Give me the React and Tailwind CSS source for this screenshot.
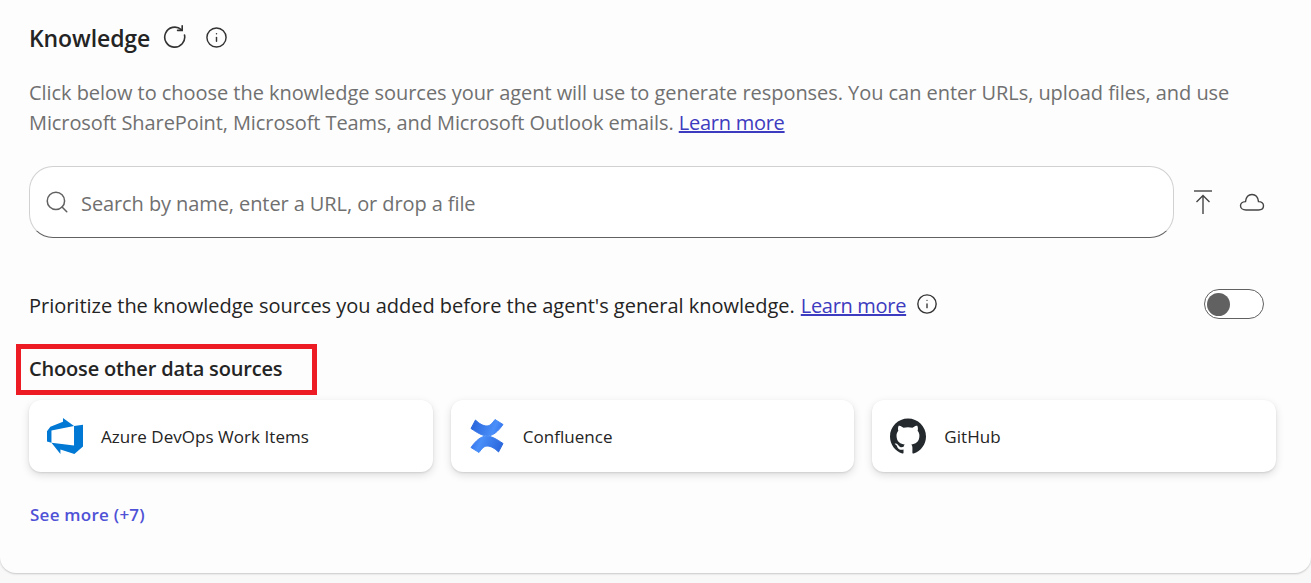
import { SiGithub } from 'react-icons/si';
import { Search, Info } from 'lucide-react';

const FONT = 'font-["Open_Sans","Noto_Sans",sans-serif]';

function AzureDevOpsIcon() {
	return (
		<svg width="36" height="36" viewBox="0 0 24 24" fill="#0078d4">
			<path d="M0 8.877L2.247 5.91l8.405-3.416V.022l7.37 5.393L2.966 8.338v8.225L0 15.707zm24-4.45v14.651l-5.753 4.9-9.303-3.057v3.056l-5.978-7.416 15.057 1.798V5.415z" />
		</svg>
	);
}

function ConfluenceIcon() {
	const band = 'M7.500 3C11 6.500 15 9 19 9C22 9 24.500 6 27 2.500L35 7.500C30.500 14 25 19 19.500 19C15 19 9.500 16 3 11.500Z';
	return (
		<svg width="38" height="38" viewBox="0 0 38 38">
			<defs>
				<linearGradient id="confBand" x1="0" y1="0" x2="1" y2="0.2">
					<stop offset="0" stopColor="#2560d8" />
					<stop offset="0.8" stopColor="#4a8ff9" />
					<stop offset="1" stopColor="#3a7bef" />
				</linearGradient>
			</defs>
			<path d={band} fill="url(#confBand)" stroke="url(#confBand)" strokeWidth="1" strokeLinejoin="round" />
			<path d={band} fill="url(#confBand)" stroke="url(#confBand)" strokeWidth="1" strokeLinejoin="round" transform="rotate(180 19 19)" />
		</svg>
	);
}

function RefreshIcon() {
	return (
		<svg width="24" height="24" viewBox="0 0 24 24" fill="none" stroke="#333333" strokeWidth="1.6" strokeLinecap="round">
			<path d="M18.300 4.600A10 10 0 1 0 21.500 10" />
			<path d="M19.200 0.800V5.400H14.600" />
		</svg>
	);
}

function UploadIcon() {
	return (
		<svg width="20" height="24" viewBox="0 0 20 24" fill="none" stroke="#444444" strokeWidth="1.4">
			<path d="M1 1H19" />
			<path d="M10 24V5.500M3.500 12L10 5.500L16.500 12" />
		</svg>
	);
}

function CloudIcon() {
	return (
		<svg width="26" height="20" viewBox="0 0 26 20" fill="none" stroke="#444444" strokeWidth="1.4">
			<path d="M7 18H19.500C22.500 18 24.500 16.200 24.500 13.800C24.500 11.300 22.500 9.500 19.500 9.600C19 5.500 16.500 2.500 13 2.500C9.500 2.500 7 5.500 6.500 9.600C3.500 9.800 1.500 11.500 1.500 13.800C1.500 16.200 3.800 18 7 18Z" />
		</svg>
	);
}

function SourceCard({ icon, label }) {
	return (
		<div className="flex h-[72px] items-center gap-[17px] rounded-[12px] bg-white pl-[17px] shadow-[0_1px_2px_rgba(0,0,0,0.1),0_3px_8px_rgba(0,0,0,0.13)]">
			<div className="flex w-[38px] justify-center">{icon}</div>
			<span className="pt-[1px] text-[17px] tracking-[0.04px] text-[#242424]">{label}</span>
		</div>
	);
}

export default function App() {
	return (
		<div className={`h-[583px] w-[1311px] overflow-hidden bg-[#f8f8f8] ${FONT}`}>
			<div className="relative h-[573px] rounded-b-[16px] bg-[#fdfdfd] pl-[29px] pr-[35px] shadow-[0_1px_2px_rgba(0,0,0,0.2)]">
				<div className="flex h-[76px] items-center pt-[1px]">
					<h2 className="text-[23px] font-semibold tracking-[-0.1px] text-[#242424]">Knowledge</h2>
					<span className="mb-[3px] ml-[13px] flex"><RefreshIcon /></span>
					<Info className="mb-[3px] ml-[18px]" size={23} strokeWidth={1.5} color="#333333" />
				</div>

				<p className="pt-[2px] text-[20px] leading-[30px] tracking-[-0.05px] text-[#707070]">
					Click below to choose the knowledge sources your agent will use to generate responses. You can enter URLs, upload files, and use
					<br />
					<span className="tracking-[-0.095px]">Microsoft SharePoint, Microsoft Teams, and Microsoft Outlook emails.</span>{' '}
					<a className="tracking-[-0.25px] text-[#3d3bbf] underline">Learn more</a>
				</p>

				<div className="mt-[28px] flex items-center">
					<div className="flex h-[72px] flex-1 items-center rounded-[24px] border border-[#d1d1d1] border-b-[#616161] bg-white pl-[14px]">
						<Search size={26} strokeWidth={1.4} color="#616161" />
						<span className="ml-[11px] pt-[4px] text-[20px] tracking-[-0.09px] text-[#707070]">Search by name, enter a URL, or drop a file</span>
					</div>
					<div className="ml-[19px] flex items-center">
						<UploadIcon />
						<span className="ml-[26px] flex"><CloudIcon /></span>
					</div>
					<div className="w-[11px]" />
				</div>

				<div className="mt-[51px] flex h-[30px] items-center justify-between pr-[12px]">
					<div className="flex items-center text-[20px] tracking-[-0.02px] text-[#242424]">
						<span className="pt-[4px]">Prioritize the knowledge sources you added before the agent's general knowledge.</span>
						<a className="ml-[6px] pt-[4px] tracking-[-0.3px] text-[#3d3bbf] underline">Learn more</a>
						<Info className="ml-[10px]" size={22} strokeWidth={1.5} color="#333333" />
					</div>
					<div className="flex h-[30px] w-[60px] items-center rounded-full border border-[#616161] bg-white pl-[2px]">
						<div className="h-[23px] w-[23px] rounded-full bg-[#616161]" />
					</div>
				</div>

				<h3 className="mt-[35px] text-[20px] font-semibold leading-[30px] tracking-[-0.17px] text-[#242424]">Choose other data sources</h3>

				<div className="mt-[16px] grid grid-cols-3 gap-[18px]">
					<SourceCard label="Azure DevOps Work Items" icon={<AzureDevOpsIcon />} />
					<SourceCard label="Confluence" icon={<ConfluenceIcon />} />
					<SourceCard label="GitHub" icon={<SiGithub size={36} color="#24292e" />} />
				</div>

				<a className="mt-[31px] ml-px block text-[17px] font-semibold leading-[24px] tracking-[0.25px] text-[#4f52d6]">See more (+7)</a>

				{/* annotation box drawn over the screenshot */}
				<div className="absolute left-[16px] top-[344px] h-[51px] w-[301px] border-[5px] border-[#ed1c24]" />
			</div>
		</div>
	);
}
